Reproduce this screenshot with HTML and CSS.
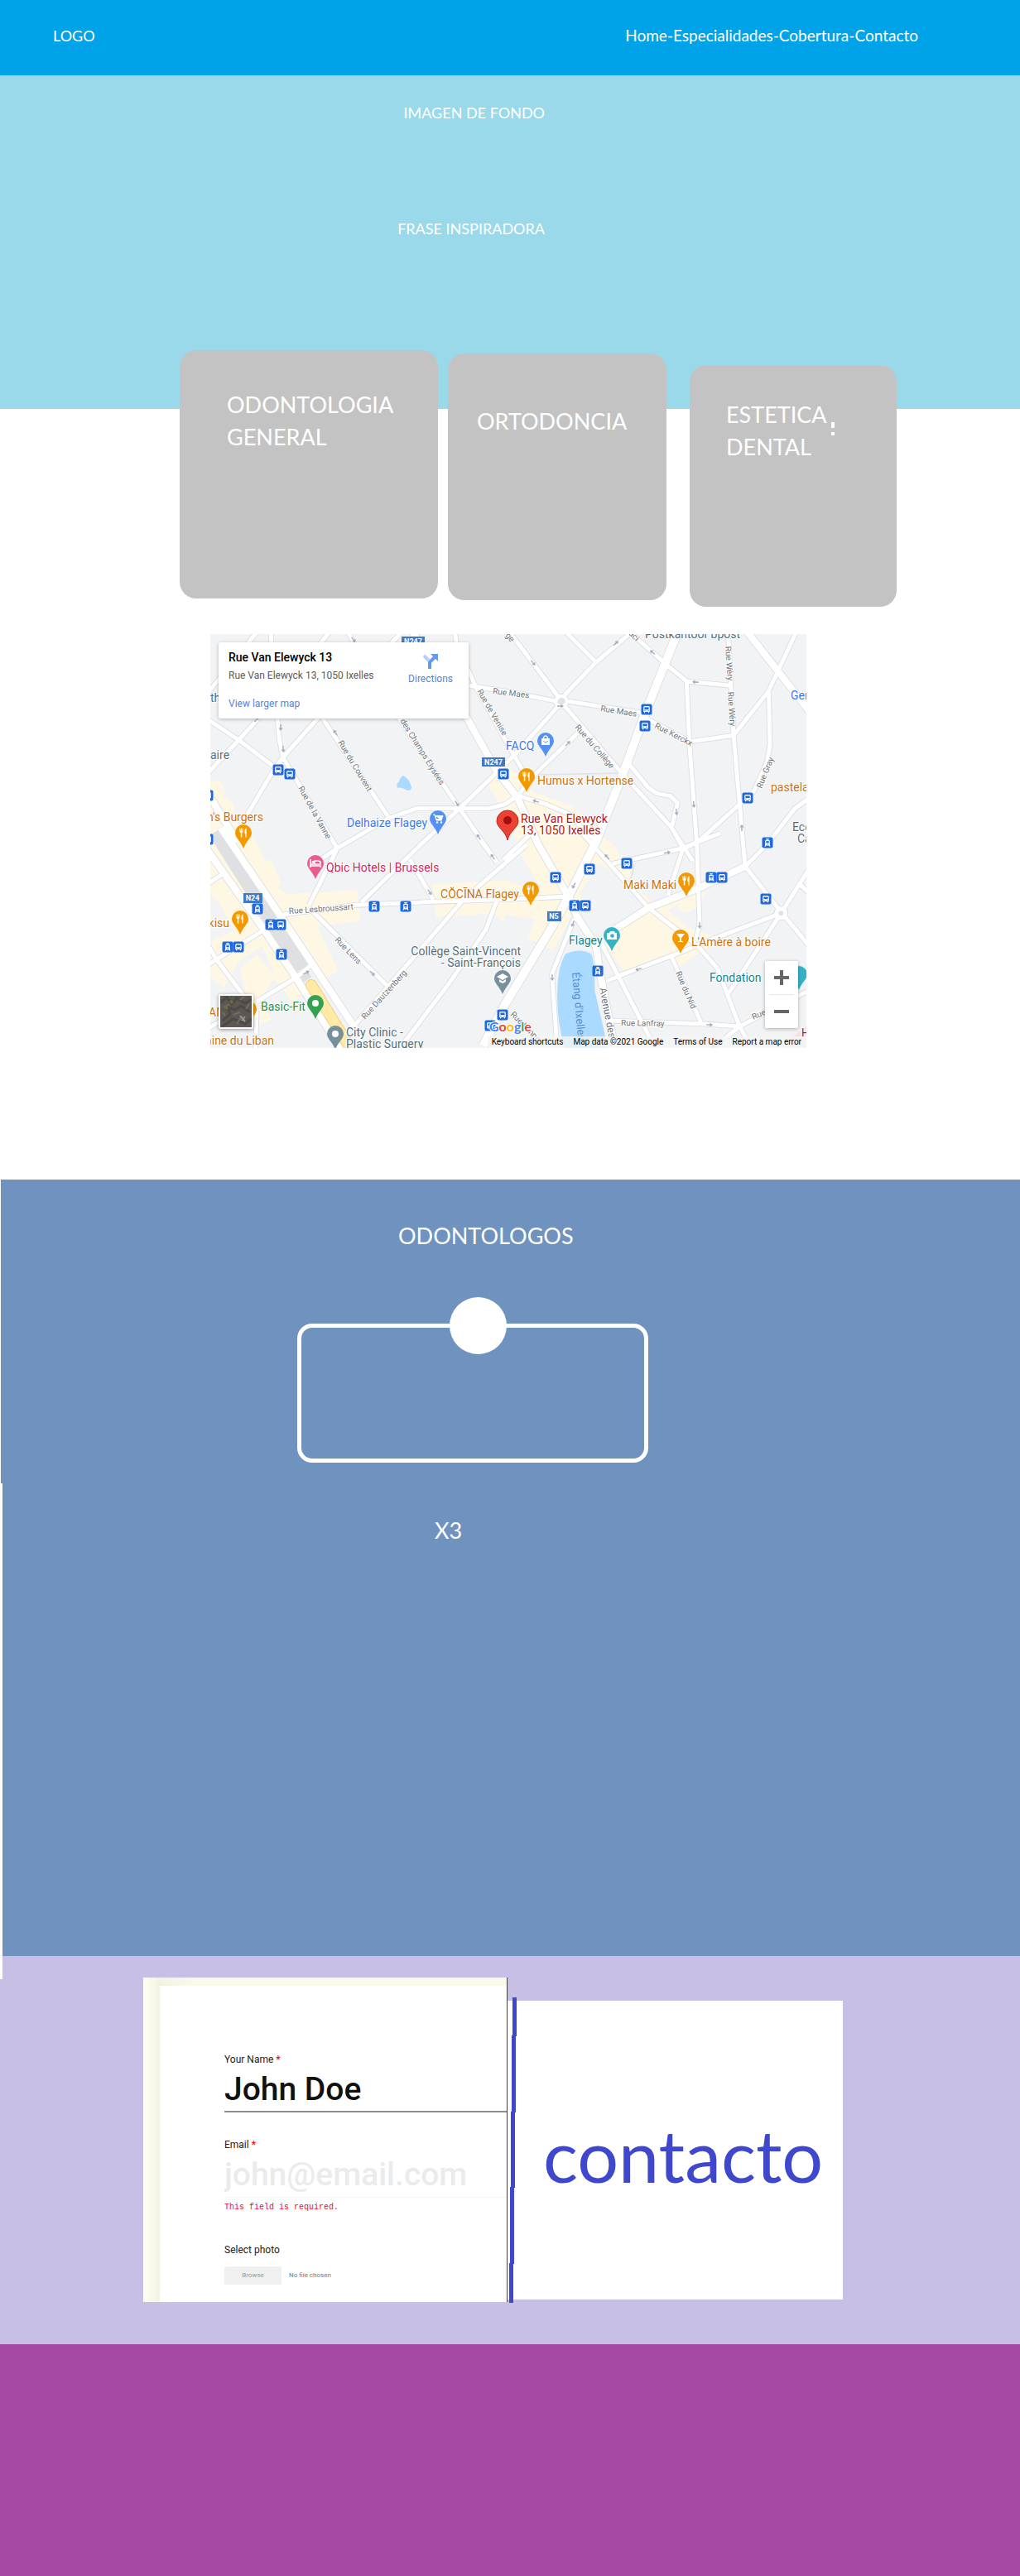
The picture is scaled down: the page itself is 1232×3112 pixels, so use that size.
FILE: index.html
```html
<!DOCTYPE html>
<html lang="es">
<head>
<meta charset="utf-8">
<meta name="viewport" content="width=device-width, initial-scale=1">
<title>Odontologia</title>
<link rel="stylesheet" href="styles.css">
</head>
<body>
<header class="topbar">
  <a class="logo" href="#">LOGO</a>
  <nav class="menu"><a href="#">Home</a>-<a href="#especialidades">Especialidades</a>-<a href="#cobertura">Cobertura</a>-<a href="#contacto">Contacto</a></nav>
</header>

<main>
  <section class="hero">
    <p>IMAGEN DE FONDO</p>
    <p>FRASE INSPIRADORA</p>
  </section>

  <section class="services" id="especialidades">
    <article class="service service-general"><h2>ODONTOLOGIA GENERAL</h2></article>
    <article class="service service-ortho"><h2>ORTODONCIA</h2></article>
    <article class="service service-aesthetic"><h2>ESTETICA DENTAL</h2><span class="mark"></span></article>
  </section>

  <section class="location" id="cobertura">
    <div class="map">
      <svg class="map-canvas" viewBox="0 0 720 500" role="img" aria-label="Rue Van Elewyck 13">
        <defs>
          <g id="roads" fill="none" stroke-linejoin="round">
            <path class="r2" d="M190 0L0 235M230 0L262 400L275 465M445 10L190 320L115 402L0 525M700 18L400 325L275 465L245 505L130 700M510 10L700 330L915 650L1050 845M898 10L905 60L975 210L1080 400L1160 540M0 325L115 402L245 500M275 465L320 540L472 795M420 325L660 685M390 850L470 795L660 685L760 650L915 650L1020 650L1080 635L1125 605M370 1000L470 800M560 990L770 785L915 650L1050 520L1120 450L1285 265M950 205L1080 225L1270 262"/>
            <path class="r2" d="M1080 -10L1285 260M1290 0L1410 120M1540 10L1410 120L1295 240M1310 262L1585 305M1585 320L1750 408M1510 -10L1660 125L1740 190L1900 205M1285 265L1505 525L1680 715L1760 840M1530 490L1600 575L1630 595L1680 605L1705 630L1685 715M1350 370L1190 525L1125 605M1738 190L1748 410L1775 780L1785 1070L1770 1130M1750 408L1908 385M1888 10L1908 385L1950 860M2140 0L2035 225L1908 385M2035 225L2040 420L2030 480L1980 590L1780 770L1720 800M2200 600L2130 650L2030 780L1950 860M1130 605L1230 635L1310 670L1420 780"/>
            <path class="r2" d="M0 925L60 885M-10 1225L200 1095L290 1030M275 1035L540 1000L820 988L1060 980L1300 970M0 1140L40 1205L180 1390L175 1530M180 1350L320 1265L375 1220M0 1450L100 1390M735 835L820 980M370 1010L660 1300M1160 780L930 980L540 1430M980 750L1050 845M1050 985L1010 1090L880 1280L690 1530M1330 1050L1250 1250L1270 1530"/>
            <path class="r2" d="M1360 740L1600 1010L1780 1150L1850 1230L1930 1440L1980 1530M1470 850L1720 795L1860 740M1695 740L1725 795L1670 965M1950 860L2080 1025L2200 1170M2200 840L2080 1030L1890 1320M2140 920L2200 970M2080 1030L1840 1120L1720 1170L1510 1250L1450 1275M1430 1140L1630 1530M1680 1180L1790 1425M1470 1420L1790 1430L1930 1440L2180 1310M1930 1440L1820 1530M1075 835L1180 735"/>
            <path class="r1" d="M745 10L935 310L1050 515L1125 610L1200 780L1310 970L1340 1040L1410 1150L1425 1250L1480 1530M1950 0L2200 320M1460 1100L1600 1010L1780 940L1950 860M-20 770L200 1080L320 1260L490 1530M50 720L240 1000L380 1210L545 1460M0 590L110 770"/>
            <path class="r0" d="M1710 0L1660 125L1590 300L1505 530L1410 770L1310 970L1250 1080L1080 1360L1000 1510"/>
            <circle class="r3" cx="1284" cy="262" r="20"/>
            <circle class="r3" cx="2080" cy="1030" r="18"/>
          </g>
          <path id="arrow" d="M0-4L2.600-.5H.7V4H-.7V-.5H-2.600Z" fill="#a6acbf"/>
          <g id="bus"><rect x="-6.500" y="-6.500" width="13" height="13" rx="2" fill="#1f69e0"/><path d="M-3.800-2.500Q-3.800-4-2.300-4H2.300Q3.800-4 3.800-2.500V3H3V4.300H1.800V3H-1.800V4.300H-3V3H-3.800Z" fill="#fff"/><path d="M-2.600-2.600H2.600V.2H-2.600Z" fill="#1f69e0"/><circle cx="-2" cy="1.600" r=".6" fill="#1f69e0"/><circle cx="2" cy="1.600" r=".6" fill="#1f69e0"/></g>
          <g id="tram"><rect x="-6.500" y="-6.500" width="13" height="13" rx="2" fill="#1f69e0"/><path d="M-2-5H2V-4.200H.5V-3.200H1.500Q2.800-3.200 2.800-2V2.400L3.500 4.500H2.300L1.800 3.500H-1.800L-2.300 4.500H-3.500L-2.800 2.400V-2Q-2.800-3.200-1.500-3.200H-.5V-4.200H-2Z" fill="#fff"/><path d="M-1.700-1.900H1.700V.3H-1.700Z" fill="#1f69e0"/><circle cx="0" cy="1.800" r=".7" fill="#1f69e0"/></g>
          <path id="drop" d="M-10 0A10 10 0 1 1 10 0C10 6 4 9 0 19C-4 9-10 6-10 0Z"/>
          <path id="fork" d="M-4.500-5.500H-3.600V-2.500H-2.900V-5.500H-2V-2.500H-1.300V-5.500H-.4V-1.500Q-.4-.2-1.700 0V5.500H-3.200V0Q-4.500-.2-4.500-1.500ZM1.500 5.500V-3Q1.800-5.500 3.600-5.500V5.500H2.400V1H1.500Z" fill="#fff"/>
        </defs>

        <rect width="720" height="500" fill="#f1f3f4"/>
        <g transform="scale(.33333) translate(-12 -18)">
          <g fill="#fef7e3">
            <path d="M0 560L45 545L65 590L50 610L70 605L100 640L90 690L170 760L215 840L230 835L270 920L255 940L290 960L545 945L555 1060L400 1075L475 1240L415 1270L345 1160L340 1340L300 1345L270 1290L240 1270L215 1310L150 1370L120 1230L180 1180L250 1260L200 1150L120 1200L60 1300L0 1250V1140L100 1090L40 990L0 950Z"/>
            <path d="M160 1390L215 1370L235 1415L180 1440Z"/>
            <path d="M1015 560L1080 490L1130 530L1180 590L1320 640L1410 730L1480 790L1580 960L1620 990L1810 950L1780 1010L1730 1030L1700 1000L1670 1020L1740 1080L1860 1120L1710 1225L1660 1180L1510 1240L1440 1140L1600 1000L1500 900L1420 850L1350 960L1390 1020L1330 1020L1255 1165L1160 1120L1190 1050L1080 1035V1065L1040 1030L830 1045L815 925L1080 910L1220 960L1130 800L1080 660Z"/>
          </g>
          <path d="M690 575Q685 560 695 555Q700 535 712 531Q735 545 742 575Q735 590 722 582Q705 572 690 575Z" fill="#aadaff"/>
          <path d="M1270 1310Q1270 1230 1298 1178Q1350 1155 1390 1175Q1405 1190 1405 1310L1440 1460L1450 1530H1300Q1265 1420 1270 1310Z" fill="#aadaff"/>
          <path d="M1190 528L1505 522M1550 850L1530 930" stroke="#dfe2e6" stroke-width="5"/>
          <use href="#roads" class="casing"/>
          <path d="M30 735L345 1230" stroke="#dfe0e2" stroke-width="52"/>
          <path d="M345 1240L365 1270" stroke="#dfe0e2" stroke-width="34"/>
          <use href="#roads" class="surface"/>
          <path d="M378 1290L520 1520" stroke="#f7cf78" stroke-width="42" stroke-linecap="round"/>
          <path d="M378 1290L520 1520" stroke="#ffeaa8" stroke-width="36" stroke-linecap="round"/>
          <g fill="#dfe2e6"><circle cx="1284" cy="262" r="12"/><circle cx="2080" cy="1030" r="9"/></g>
          <path d="M2120 1480L2180 1430V1530H2080Z" fill="#fce0e0"/>
        </g>

        <g>
          <use href="#arrow" transform="translate(173 7) rotate(145)"/><use href="#arrow" transform="translate(85 113) rotate(180)"/><use href="#arrow" transform="translate(88 139) rotate(175)"/><use href="#arrow" transform="translate(56 103) rotate(40)"/><use href="#arrow" transform="translate(151 119) rotate(-35)"/><use href="#arrow" transform="translate(298 205) rotate(145)"/><use href="#arrow" transform="translate(324 245) rotate(-35)"/><use href="#arrow" transform="translate(390 35) rotate(140)"/><use href="#arrow" transform="translate(490 11) rotate(45)"/><use href="#arrow" transform="translate(534 22) rotate(-50)"/><use href="#arrow" transform="translate(586 58) rotate(-87)"/><use href="#arrow" transform="translate(423 87) rotate(90)"/><use href="#arrow" transform="translate(432 132) rotate(42)"/><use href="#arrow" transform="translate(393 202) rotate(-72)"/><use href="#arrow" transform="translate(563 215) rotate(175)"/><use href="#arrow" transform="translate(584 206) rotate(175)"/><use href="#arrow" transform="translate(642 234)"/><use href="#arrow" transform="translate(265 312) rotate(145)"/><use href="#arrow" transform="translate(341 269) rotate(-35)"/><use href="#arrow" transform="translate(196 410) rotate(135)"/><use href="#arrow" transform="translate(116 409) rotate(65)"/><use href="#arrow" transform="translate(479 269) rotate(-42)"/><use href="#arrow" transform="translate(552 264) rotate(80)"/><use href="#arrow" transform="translate(439 304) rotate(210)"/><use href="#arrow" transform="translate(438 350) rotate(200)"/><use href="#arrow" transform="translate(413 415) rotate(180)"/><use href="#arrow" transform="translate(517 405) rotate(-110)"/><use href="#arrow" transform="translate(591 352) rotate(180)"/><use href="#arrow" transform="translate(603 472) rotate(92)"/>
        </g>

        <g class="street">
          <text transform="translate(154 131) rotate(59)">Rue du Couvent</text>
          <text transform="translate(106 186) rotate(61)">Rue de la Vanne</text>
          <text transform="translate(229 105) rotate(58)">des Champs Elysées</text>
          <text transform="translate(322 69) rotate(60)">Rue de Venise</text>
          <text transform="translate(341 72) rotate(7)">Rue Maes</text>
          <text transform="translate(471 93) rotate(9)">Rue Maes</text>
          <text transform="translate(356 2) rotate(50)">ge</text>
          <text transform="translate(505 0) rotate(45)">aci</text>
          <text transform="translate(536 113) rotate(27)">Rue Kerckx</text>
          <text transform="translate(622 15) rotate(86)">Rue Wéry</text>
          <text transform="translate(625 70) rotate(86)">Rue Wéry</text>
          <text transform="translate(666 187) rotate(-68)">Rue Gray</text>
          <text transform="translate(440 113) rotate(49)">Rue du Collège</text>
          <text transform="translate(95 338) rotate(-4)">Rue Lesbroussart</text>
          <text transform="translate(150 370) rotate(46)">Rue Lens</text>
          <text transform="translate(187 466) rotate(-48)">Rue Dautzenberg</text>
          <text transform="translate(562 409) rotate(67)">Rue du Nid</text>
          <text transform="translate(496 473) rotate(1)">Rue Lanfray</text>
          <text transform="translate(656 466) rotate(-24)">Rue</text>
          <text transform="translate(362 460) rotate(45)">Rue Lannoy</text>
          <text transform="translate(607 503) rotate(-35)">erre</text>
          <text class="avenue" transform="translate(470 428) rotate(79)">Avenue des</text>
        </g>
        <text class="water" transform="translate(437 409) rotate(85)">Étang d'Ixelles</text>

        <g class="shield">
          <rect x="231" y="3" width="28" height="12"/><text x="245" y="12">N247</text>
          <rect x="328" y="149" width="28" height="11"/><text x="342" y="158">N247</text>
          <rect x="40" y="313" width="23" height="12"/><text x="51" y="322">N24</text>
          <rect x="407" y="335" width="17" height="12"/><text x="415" y="344">N5</text>
        </g>

        <g>
          <use href="#bus" x="82" y="164"/><use href="#bus" x="96" y="169"/><use href="#bus" x="354" y="169"/><use href="#bus" x="-3" y="195"/><use href="#bus" x="-3" y="248"/><use href="#bus" x="527" y="91"/><use href="#bus" x="525" y="111"/><use href="#bus" x="649" y="198"/><use href="#tram" x="673" y="252"/><use href="#tram" x="57" y="332"/><use href="#tram" x="73" y="351"/><use href="#bus" x="85" y="351"/><use href="#tram" x="21" y="378"/><use href="#bus" x="34" y="378"/><use href="#tram" x="86" y="387"/><use href="#tram" x="198" y="329"/><use href="#tram" x="236" y="329"/><use href="#bus" x="353" y="460"/><use href="#bus" x="338" y="473"/><use href="#bus" x="417" y="294"/><use href="#bus" x="458" y="284"/><use href="#bus" x="503" y="277"/><use href="#tram" x="440" y="328"/><use href="#bus" x="453" y="328"/><use href="#tram" x="605" y="294"/><use href="#bus" x="618" y="294"/><use href="#bus" x="671" y="320"/><use href="#tram" x="468" y="407"/>
        </g>

        <g class="poi">
          <g class="slate">
            <text x="0" y="82">th</text><text x="0" y="151">aire</text><text x="525" y="5">Postkantoor bpost</text><text x="703" y="238">Eco</text><text x="709" y="252">Ca</text>
            <text x="375" y="388" text-anchor="end">Collège Saint-Vincent</text><text x="375" y="402" text-anchor="end">- Saint-François</text>
            <text x="164" y="486">City Clinic -</text><text x="164" y="500">Plastic Surgery</text>
          </g>
          <g class="blue"><text x="165" y="233">Delhaize Flagey</text><text x="357" y="140">FACQ</text><text x="701" y="79">Gen</text></g>
          <g class="orange"><text x="64" y="226" text-anchor="end">n's Burgers</text><text x="395" y="182">Humus x Hortense</text><text x="677" y="190">pastela</text><text x="373" y="319" text-anchor="end">CŎCĪNA Flagey</text><text x="23" y="354" text-anchor="end">kisu</text><text x="-2" y="462">AM</text><text x="77" y="496" text-anchor="end">aine du Liban</text><text x="499" y="308">Maki Maki</text><text x="581" y="377">L'Amère à boire</text></g>
          <g class="pink"><text x="140" y="287">Qbic Hotels | Brussels</text></g>
          <g class="green"><text x="61" y="455">Basic-Fit</text></g>
          <g class="teal"><text x="433" y="375">Flagey</text><text x="603" y="420">Fondation</text></g>
          <g class="red"><text x="375" y="228">Rue Van Elewyck</text><text x="375" y="242">13, 1050 Ixelles</text><text x="714" y="487">H</text></g>
        </g>

        <g fill="#f29900"><use href="#drop" x="40" y="240"/><use href="#drop" x="382" y="172"/><use href="#drop" x="387" y="309"/><use href="#drop" x="36" y="344"/><use href="#drop" x="46" y="453"/><use href="#drop" x="575" y="298"/><use href="#drop" x="568" y="367"/></g>
        <use href="#fork" x="40" y="240"/><use href="#fork" x="382" y="172"/><use href="#fork" x="387" y="309"/><use href="#fork" x="36" y="344"/><use href="#fork" x="575" y="298"/>
        <path d="M563 362H573L569 367V371H571V372H565V371H567V367Z" fill="#fff"/>
        <g fill="#5491f5"><use href="#drop" x="275" y="223"/><use href="#drop" x="405" y="129"/></g>
        <path d="M269 218H271L273 225H280M272 219.500H281L279.500 223.500H273Z" fill="#fff" stroke="#fff"/><circle cx="274" cy="227.500" r="1.200" fill="#fff"/><circle cx="279" cy="227.500" r="1.200" fill="#fff"/>
        <path d="M400 126H410V134H400Z" fill="#fff"/><path d="M402.500 126V125Q405 121 407.500 125V126" fill="none" stroke="#fff" stroke-width="1.300"/><path d="M402.500 129Q405 133 407.500 129" fill="none" stroke="#5491f5"/>
        <g fill="#ea5b8e"><use href="#drop" x="127" y="277"/></g>
        <path d="M121 272V282M121 280H133V282M122 278H133V276Q133 274 130 274H126V278" fill="none" stroke="#fff" stroke-width="1.500"/><circle cx="124" cy="275.500" r="1.400" fill="#fff"/>
        <g fill="#34a350"><use href="#drop" x="127" y="446"/></g><circle cx="127" cy="446" r="4" fill="#fff"/>
        <g fill="#78909c"><use href="#drop" x="151" y="483"/><use href="#drop" x="353" y="416"/></g><circle cx="151" cy="483" r="4" fill="#fff"/>
        <path d="M346 414L353 410L360 414L353 418ZM349 417L353 419.500L357 417V420L353 422L349 420Z" fill="#fff"/>
        <g fill="#34b3c5"><use href="#drop" x="485" y="364"/><use href="#drop" x="711" y="411"/></g>
        <path d="M479 361H482L483 359H488L489 361H491V369H479Z" fill="#fff"/><circle cx="485.500" cy="364.500" r="2.300" fill="#34b3c5"/>
        <path d="M346 226A13 13 0 1 1 372 226C372 234 361 238 359 249C357 238 346 234 346 226Z" fill="#ea4335" stroke="#c5221f"/><circle cx="359" cy="225" r="5" fill="#a50e0e"/>

        <text class="brand" x="337" y="480"><tspan fill="#4285f4">G</tspan><tspan fill="#ea4335">o</tspan><tspan fill="#fbbc04">o</tspan><tspan fill="#4285f4">g</tspan><tspan fill="#34a853">l</tspan><tspan fill="#ea4335">e</tspan></text>
      </svg>

      <div class="place">
        <div class="place-text">
          <h3>Rue Van Elewyck 13</h3>
          <p>Rue Van Elewyck 13, 1050 Ixelles</p>
          <a href="#">View larger map</a>
        </div>
        <a class="directions" href="#">
          <svg width="18" height="18" viewBox="0 0 18 18"><path d="M1 2L7 8" stroke="#b6cff5" stroke-width="4"/><path d="M8 18V10L14 4" fill="none" stroke="#659ae8" stroke-width="4"/><path d="M9 0H18V9Z" fill="#659ae8"/></svg>
          Directions
        </a>
      </div>

      <button class="satellite" type="button" aria-label="Satellite">
        <svg viewBox="0 0 38 38"><rect width="38" height="38" fill="#5c5752"/><path d="M0 8L8 2L14 10L20 3L30 9L38 4M3 30L12 22L9 14L18 17L25 12L36 20M2 37L16 28L30 34L38 28" fill="none" stroke="#4b4a44" stroke-width="3"/><path d="M4 14L11 10M16 23L24 20M24 5L29 1M6 24L3 20M20 34L25 26M31 16L35 10" stroke="#756c65" stroke-width="2"/><path d="M5 12L9 16M12 6L15 9" stroke="#69713c" stroke-width="3"/><path d="M24 24L30 31M26 30L30 25" stroke="#8d9793" stroke-width="2"/></svg>
      </button>

      <div class="zoom">
        <button type="button" aria-label="Zoom in"><svg width="18" height="18" viewBox="0 0 18 18"><path d="M9 0V18M0 9H18" stroke="#666" stroke-width="4"/></svg></button>
        <button type="button" aria-label="Zoom out"><svg width="18" height="18" viewBox="0 0 18 18"><path d="M0 9H18" stroke="#666" stroke-width="4"/></svg></button>
      </div>

      <div class="legal"><a href="#">Keyboard shortcuts</a><span>Map data ©2021 Google</span><a href="#">Terms of Use</a><a href="#">Report a map error</a></div>
    </div>
  </section>

  <section class="dentists">
    <h2>ODONTOLOGOS</h2>
    <div class="dentist"><span class="avatar"></span></div>
    <p>X3</p>
  </section>

  <section class="contact" id="contacto">
    <form class="form">
      <div class="sheet">
        <div class="field">
          <label for="name">Your Name <b>*</b></label>
          <input id="name" type="text" value="John Doe">
        </div>
        <div class="field field-email">
          <label for="email">Email <b>*</b></label>
          <input id="email" type="email" placeholder="john@email.com">
          <p class="error">This field is required.</p>
        </div>
        <div class="field field-photo">
          <label for="photo">Select photo</label>
          <div class="upload"><button id="photo" type="button">Browse</button><span>No file chosen</span></div>
        </div>
      </div>
    </form>
    <div class="panel">
      <svg class="stroke" width="9" height="373" viewBox="0 0 9 373"><path d="M6.500 2V49M5.500 48V141M4.500 140V232M3.500 231V324M2.500 323V371" stroke="#3f48cc" stroke-width="5"/></svg>
      <h2>contacto</h2>
    </div>
  </section>
</main>
<footer class="footer"></footer>
</body>
</html>
```
FILE: styles.css
```css
* { box-sizing: border-box; }

body {
  margin: 0;
  background: #fff;
  color: #fff;
  font-family: Lato, "Liberation Sans", sans-serif;
  font-size: 18px;
  line-height: 24px;
}

h2, h3, p { margin: 0; font-weight: 400; }
a { color: inherit; text-decoration: none; }
button, input { font: inherit; }

/* Header and hero */
.topbar {
  display: flex;
  justify-content: space-between;
  align-items: flex-start;
  min-height: 91px;
  padding: 31px 123px 0 64px;
  background: #00a2e8;
}
.menu { font-size: 19px; }

.hero {
  display: flex;
  flex-direction: column;
  align-items: flex-end;
  gap: 116px;
  min-height: 403px;
  padding: 33px 574px 0 0;
  background: #99d9ea;
}

/* Service cards */
.services {
  position: relative;
  display: grid;
  grid-template-columns: 312fr 264fr 266fr;
  align-items: start;
  gap: 12px;
  margin: -71px 149px 0 217px;
}

.service {
  min-width: 0;
  border-radius: 20px;
  background: #c3c3c3;
}

.service h2, .dentists h2, .dentists p {
  font-size: 27px;
  line-height: 39px;
}

.service-general { min-height: 300px; padding: 46px 50px 0 57px; }
.service-ortho { min-height: 298px; margin-top: 4px; padding: 62px 36px 0 35px; }
.service-aesthetic {
  position: relative;
  min-height: 292px;
  margin: 18px 0 0 16px;
  padding: 40px 72px 0 44px;
}

.mark {
  position: absolute;
  top: 69px;
  left: 171px;
  width: 4px;
  height: 16px;
  background: linear-gradient(#fff 7px, transparent 7px 12px, #fff 12px);
}

/* Map */
.location { padding: 33px 258px 159px 254px; }

.map {
  position: relative;
  overflow: hidden;
  color: #000;
  font-family: Roboto, "Liberation Sans", sans-serif;
}

.map-canvas { display: block; width: 100%; }
.casing { --edge: 5px; stroke: #d9dce2; }
.surface { --edge: 0px; stroke: #fff; }
.r0 { stroke-width: calc(30px + var(--edge)); }
.r1 { stroke-width: calc(25px + var(--edge)); }
.r2 { stroke-width: calc(15px + var(--edge)); }
.r3 { stroke-width: calc(12px + var(--edge)); }

.map-canvas text {
  paint-order: stroke;
  stroke: #fff;
  stroke-width: 2px;
  stroke-linejoin: round;
}
.street { fill: #70757a; font-size: 10px; }
.street .avenue { font-size: 12px; }
.map-canvas .water { fill: #5b8ec9; font-size: 13px; stroke: none; }
.shield rect { fill: #4279c4; }
.map-canvas .shield text { fill: #fff; stroke: none; font-size: 9px; font-weight: 700; text-anchor: middle; }
.poi { font-size: 14px; }
.slate { fill: #546e7a; }
.blue { fill: #3b78e7; }
.orange { fill: #c77212; }
.pink { fill: #d81b60; }
.green { fill: #2b8c46; }
.teal { fill: #12858a; }
.red { fill: #b31412; }
.map-canvas .brand { font-family: Lato, sans-serif; font-size: 16px; font-weight: 700; }

.place {
  position: absolute;
  top: 10px;
  left: 10px;
  display: flex;
  justify-content: space-between;
  width: 302px;
  height: 92px;
  padding: 10px 19px 0 12px;
  border-radius: 2px;
  background: #fff;
  box-shadow: 0 1px 4px rgba(0, 0, 0, .25);
  font-size: 12px;
  line-height: 16px;
}
.place h3 { margin-bottom: 6px; font-size: 14px; font-weight: 500; }
.place p { margin-bottom: 18px; color: #5b5b5b; }
.place a { color: #5484dd; }
.directions { display: flex; flex-direction: column; align-items: center; gap: 4px; padding-top: 4px; }

.satellite {
  position: absolute;
  bottom: 23px;
  left: 10px;
  width: 42px;
  height: 42px;
  padding: 0;
  border: 2px solid #fff;
  border-radius: 2px;
  background: #fff;
  box-shadow: 0 1px 4px rgba(0, 0, 0, .4);
}
.satellite svg { display: block; }

.zoom {
  position: absolute;
  right: 10px;
  bottom: 24px;
  width: 40px;
  border-radius: 2px;
  background: #fff;
  box-shadow: 0 1px 4px rgba(0, 0, 0, .3);
}
.zoom button {
  display: grid;
  place-items: center;
  width: 30px;
  height: 40px;
  margin: 0 5px;
  padding: 0;
  border: 0;
  background: none;
}
.zoom button + button { height: 41px; border-top: 1px solid #e6e6e6; }

.legal {
  position: absolute;
  right: 0;
  bottom: 0;
  display: flex;
  gap: 12px;
  padding: 0 6px 0 5px;
  background: rgba(245, 245, 245, .8);
  font-size: 10px;
  line-height: 14px;
  white-space: nowrap;
}

/* Dentists */
.dentists {
  min-height: 938px;
  padding-top: 48px;
  background:
    linear-gradient(#fff, #fff) 0 0 / 1px 367px no-repeat,
    linear-gradient(#fff, #fff) 0 367px / 3px 100% no-repeat,
    #7092be;
}
.dentists h2 { padding-left: 481px; }
.dentists p { padding-left: 525px; }

.dentist {
  position: relative;
  min-height: 168px;
  margin: 87px 449px 62px 359px;
  border: 5px solid #fff;
  border-radius: 18px;
}
.avatar {
  position: absolute;
  top: -37px;
  left: 179px;
  width: 69px;
  height: 69px;
  border-radius: 50%;
  background: #fff;
}

/* Contact */
.contact {
  display: grid;
  grid-template-columns: 440fr 405fr;
  align-items: start;
  min-height: 469px;
  padding: 26px 214px 0 173px;
  background: linear-gradient(#fff, #fff) 0 0 / 3px 28px no-repeat, #c8bfe7;
}

.form {
  min-width: 0;
  min-height: 392px;
  padding: 10px 0 0 20px;
  border-right: 1px solid #404040;
  background: linear-gradient(90deg, #fffff0, #f3f3e4 20px, #fafaec 60px, #fafaec);
  color: #222;
  font-family: Roboto, "Liberation Sans", sans-serif;
}
.sheet {
  min-height: 382px;
  padding: 81px 0 0 78px;
  background: #fff;
}
.field { margin-bottom: 31px; }
.field-email { margin-bottom: 36px; }
.field-photo { margin-bottom: 0; }
.field label { display: block; margin-bottom: 5px; font-size: 12px; line-height: 16px; }
.field b { color: #e81123; }
.field input {
  display: block;
  width: 100%;
  height: 51px;
  padding: 0 0 4px;
  border: 0;
  border-bottom: 2px solid #8c8c8c;
  border-radius: 0;
  background: none;
  color: #111;
  font-size: 39px;
  font-weight: 500;
}
.field .error { margin-top: 5px; }
.field-email input { border-bottom: 1px solid #f4f4f4; }
.field input::placeholder { color: #ebebeb; opacity: 1; }
.error { color: #e81123; font-family: "Liberation Mono", monospace; font-size: 10px; line-height: 14px; }
.upload { display: flex; align-items: center; gap: 9px; margin-top: 12px; color: #777; font-size: 8px; line-height: 22px; }
.upload button {
  width: 69px;
  height: 22px;
  padding: 0;
  border: 0;
  border-radius: 2px;
  background: #f0f0f0;
  color: #999;
}

.panel {
  position: relative;
  min-height: 361px;
  margin-top: 28px;
  padding: 138px 0 0 43px;
  background: #fff;
  color: #3f48cc;
}
.panel h2 { font-size: 88px; line-height: 96px; }
.stroke { position: absolute; top: -6px; left: 2px; }

.footer { min-height: 280px; background: #a349a4; }
```
